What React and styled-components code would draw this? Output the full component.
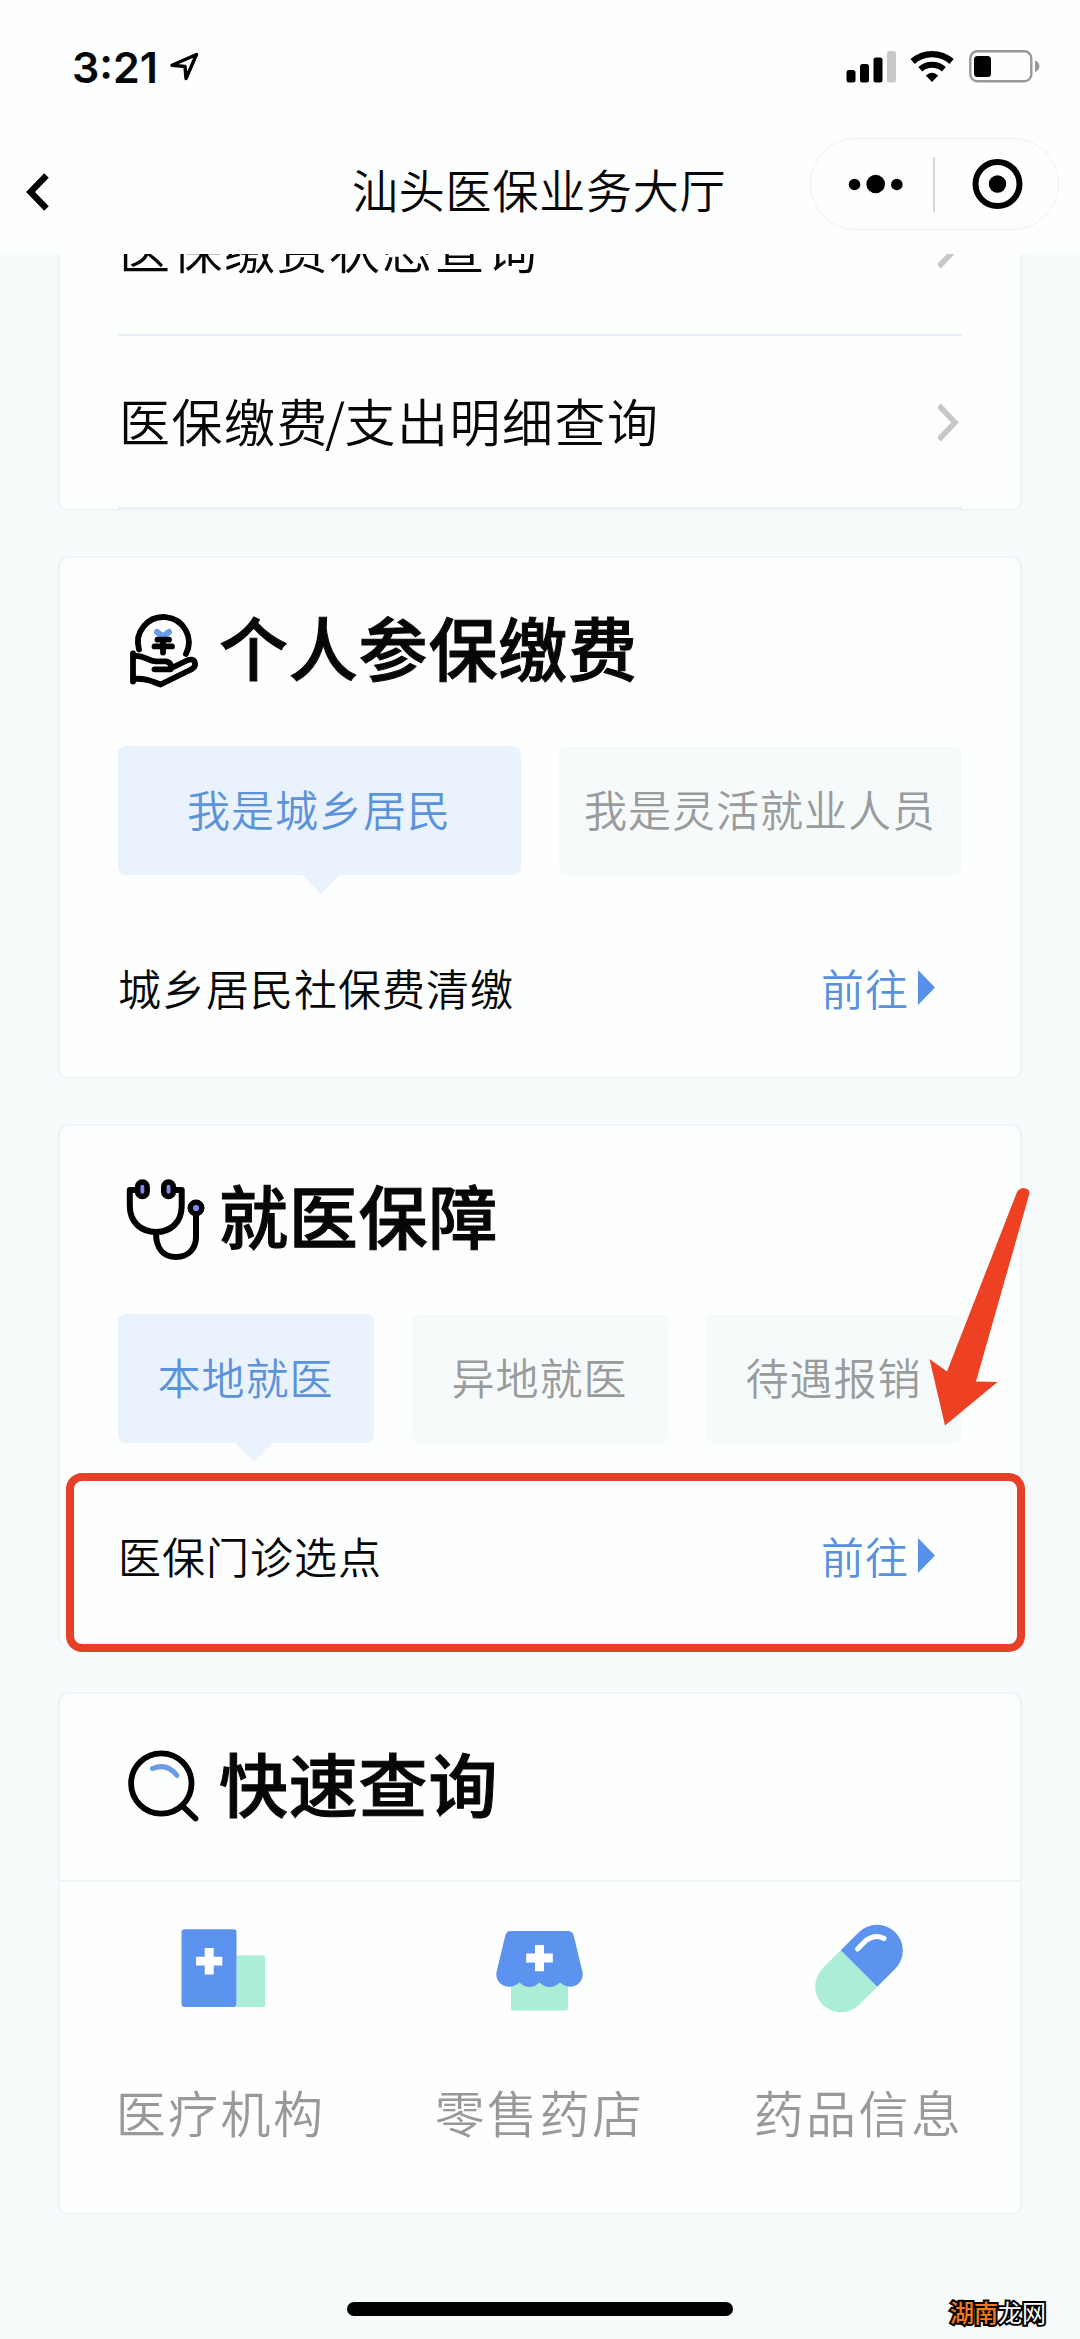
import React, { useState } from 'react';
import styled, { createGlobalStyle } from 'styled-components';

const rows = [['医保缴费状态查询'], ['医保缴费', '支出明细查询']];

const payTabs = ['我是城乡居民', '我是灵活就业人员'];
const careTabs = ['本地就医', '异地就医', '待遇报销'];

function StatusIcons() {
  return (
    <svg width="194" height="34" viewBox="846 50 194 34">
      <rect x="846.5" y="70" width="9" height="12.5" rx="2.5" />
      <rect x="860" y="64" width="9" height="18.5" rx="2.5" />
      <rect x="873.5" y="57.5" width="9" height="25" rx="2.5" />
      <rect x="887" y="51" width="9" height="31.5" rx="2.5" fill="#c9c9cb" />
      <path d="M912.6 61.5 A29.5 29.5 0 0 1 951.6 61.5" fill="none" stroke="#000" strokeWidth="6.4" />
      <path d="M920.3 69.2 A18 18 0 0 1 943.9 69.2" fill="none" stroke="#000" strokeWidth="6" />
      <path d="M925.8 75.5 Q932 70 938.2 75.5 L932 82 Z" />
      <rect x="970.3" y="51.3" width="61" height="30" rx="7" fill="none" stroke="#98999b" strokeWidth="2.4" />
      <rect x="974" y="56" width="17" height="21" rx="3.5" />
      <path d="M1035 60.5 Q1039.4 62 1039.4 66.2 Q1039.4 70.5 1035 72 Z" fill="#98999b" />
    </svg>
  );
}

function PayIcon() {
  return (
    <svg width="80" height="80" viewBox="127 608 80 80" fill="none" stroke="#000" strokeWidth="5.8" strokeLinecap="round" strokeLinejoin="round">
      <path d="M140 647.5 A25.4 25.4 0 1 1 187 652" />
      <path d="M158 630 L164 634.5 L170 630" stroke="#6a9be4" strokeWidth="6" />
      <path d="M158.5 637.7 H170 M155.5 644.4 H173 M164 638 V650.5" />
      <path d="M134 651.5 V679.5 M135 654 C145 652.5 149 659.5 157 659.3 H167 Q172 660 172.5 666 L189 658 Q196.5 656 196 663 Q195.5 666 191 668 L161.6 682.5 C150 678 146 676.5 135 676.8" />
      <path d="M155.5 667.3 H171.5" />
    </svg>
  );
}

function CareIcon() {
  return (
    <svg width="80" height="84" viewBox="126 1176 80 84" fill="none" stroke="#000" strokeWidth="6" strokeLinecap="round" strokeLinejoin="round">
      <path d="M138 1190 H129.8 V1206 C129.8 1222 141 1232 156 1232 C171 1232 181.7 1222 181.7 1206 V1190 H173" />
      <path d="M156 1233 C156 1249 164 1257 176 1257 C188 1257 196 1249 196 1237 V1212" />
      <rect x="137.6" y="1182" width="9.5" height="14.5" rx="4.7" fill="#7d89e8" strokeWidth="5.6" />
      <rect x="163.8" y="1182" width="9.5" height="14.5" rx="4.7" fill="#7d89e8" strokeWidth="5.6" />
      <circle cx="196" cy="1208" r="5.8" fill="#7d89e8" strokeWidth="5.4" />
    </svg>
  );
}

function SearchIcon() {
  return (
    <svg width="80" height="80" viewBox="126 1745 80 80" fill="none" stroke="#000" strokeLinecap="round">
      <circle cx="161.3" cy="1782.500" r="30.2" strokeWidth="5.8" />
      <path d="M183.5 1806 L195.5 1817.5" strokeWidth="5.8" />
      <path d="M152.5 1767.5 Q167 1761.5 177 1774.5" stroke="#6a9be4" strokeWidth="5" />
    </svg>
  );
}

function HospitalIcon() {
  return (
    <svg width="88" height="92" viewBox="178.5 1922 88 92">
      <path d="M238 1955.5 H264.5 Q267 1955.5 267 1958 V2004.5 Q267 2007 264.5 2007 H238 Z" fill="#abeed5" />
      <rect x="183" y="1929.3" width="55" height="77.8" rx="3" fill="#5b93ee" />
      <path d="M206.2 1948 h9 v8.8 h8.6 v8.8 h-8.6 v8.8 h-9 v-8.8 h-8.6 v-8.8 h8.6 Z" fill="#fff" />
    </svg>
  );
}

function StoreIcon() {
  return (
    <svg width="88" height="92" viewBox="497 1922 88 92">
      <path d="M512 1980 H569 V2008 Q569 2010.5 566.5 2010.5 H514.5 Q512 2010.5 512 2008 Z" fill="#abeed5" />
      <path d="M511 1931 H569 Q573.5 1931 574.7 1935.5 L583.7 1973 C584.5 1986 570 1991 561 1982.5 Q550.5 1991.5 540.5 1982.5 Q530.5 1991.5 520.5 1982.5 C511 1991 496.5 1986 497.3 1973 L506.3 1935.5 Q507.5 1931 511 1931 Z" fill="#5b93ee" />
      <path d="M536 1945 h9 v8.6 h8.8 v8.8 h-8.8 v8.8 h-9 v-8.8 h-8.8 v-8.8 h8.8 Z" fill="#fff" />
    </svg>
  );
}

function PillIcon() {
  return (
    <svg width="90" height="92" viewBox="815 1922 90 92">
      <g transform="rotate(-45 860 1968.5)">
        <path d="M860 1942.7 H834.5 A25.8 25.8 0 0 0 834.5 1994.3 H860 Z" fill="#abeed5" />
        <path d="M860 1942.7 H885.5 A25.8 25.8 0 0 1 885.5 1994.3 H860 Z" fill="#5b93ee" />
      </g>
      <path d="M858.5 1949 L867 1940.5 Q876 1933.5 885 1938.5" fill="none" stroke="#fff" strokeWidth="5" strokeLinecap="round" />
    </svg>
  );
}

const entries = [
  { name: '医疗机构', icon: <HospitalIcon /> },
  { name: '零售药店', icon: <StoreIcon /> },
  { name: '药品信息', icon: <PillIcon /> },
];

function Tabs({ items }) {
  const [active, setActive] = useState(0);
  return (
    <TabBar $count={items.length}>
      {items.map((name, index) => (
        <Tab
          key={name}
          $active={index === active}
          $narrow={items.length > 2}
          onClick={() => setActive(index)}
        >
          {name}
        </Tab>
      ))}
    </TabBar>
  );
}

function GoRow({ name }) {
  return (
    <Service>
      <span>{name}</span>
      <GoLink>
        前往
        <svg width="17" height="35" viewBox="0 0 17 35">
          <path d="M0 0 L17 17.5 L0 35 Z" fill="#5790ea" />
        </svg>
      </GoLink>
    </Service>
  );
}

function App() {
  return (
    <>
      <GlobalStyle />
      <Screen>
        <Header>
          <StatusBar>
            <Clock>3:21</Clock>
            <svg width="29" height="29" viewBox="0 0 29 29">
              <path d="M2 13.3 L26.5 2.5 L16 26.5 L15 14.5 Z" fill="none" stroke="#000" strokeWidth="3.4" strokeLinejoin="round" />
            </svg>
            <Spacer />
            <StatusIcons />
          </StatusBar>
          <NavBar>
            <BackIcon width="24" height="40" viewBox="0 0 24 40">
              <path d="M21.5 3.5 L5.5 20 L21.5 36.5" fill="none" stroke="#000" strokeWidth="6.4" />
            </BackIcon>
            <Title>汕头医保业务大厅</Title>
            <Capsule>
              <svg width="56" height="20" viewBox="0 0 56 20">
                <circle cx="6.5" cy="10.5" r="5.8" />
                <circle cx="27.7" cy="10" r="9.3" />
                <circle cx="48.8" cy="10.5" r="5.8" />
              </svg>
              <Divider />
              <svg width="52" height="52" viewBox="0 0 52 52">
                <circle cx="26.5" cy="26" r="22" fill="none" stroke="#000" strokeWidth="6" />
                <circle cx="26.5" cy="26" r="8.7" />
              </svg>
            </Capsule>
          </NavBar>
        </Header>

        <Content>
          <QueryCard>
            {rows.map(([name, rest]) => (
              <QueryRow key={rest || name}>
                <span>
                  {name}
                  {rest && <Slash>/</Slash>}
                  {rest}
                </span>
                <svg width="24" height="40" viewBox="0 0 24 40">
                  <path d="M0.8 3.5 L17 20.5 L0.8 37.5" fill="none" stroke="#c6c7c9" strokeWidth="5.6" />
                </svg>
              </QueryRow>
            ))}
          </QueryCard>

          <Card>
            <CardTitle>
              <PayIcon />
              <span>个人参保缴费</span>
            </CardTitle>
            <Tabs items={payTabs} />
            <GoRow name="城乡居民社保费清缴" />
          </Card>

          <Card>
            <CardTitle>
              <CareIcon />
              <span>就医保障</span>
            </CardTitle>
            <Tabs items={careTabs} />
            <GoRow name="医保门诊选点" />
            <Highlight />
            <Pointer width="104" height="242" viewBox="928 1186 104 242">
              <path d="M1017 1192 Q1021 1186.5 1026 1188.5 Q1030.5 1190 1029 1195 L976 1381.5 L997.5 1382 L945 1425.5 L929.5 1359 L947 1371.5 Z" fill="#ee4023" />
            </Pointer>
          </Card>

          <Card>
            <CardTitle>
              <SearchIcon />
              <span>快速查询</span>
            </CardTitle>
            <Entries>
              {entries.map((item) => (
                <Entry key={item.name}>
                  {item.icon}
                  {item.name}
                </Entry>
              ))}
            </Entries>
          </Card>
        </Content>

        <HomeIndicator />
        <Watermark>
          <b>湖南</b>
          龙网
        </Watermark>
      </Screen>
    </>
  );
}

const GlobalStyle = createGlobalStyle`
  body {
    margin: 0;
    background: #f7fbfc;
  }
`;

const Screen = styled.div`
  position: relative;
  display: flex;
  flex-direction: column;
  width: 1080px;
  height: 2339px;
  overflow: hidden;
  background: #f7fbfc;
  color: #060708;
  font-family: 'Noto Sans CJK SC', sans-serif;
  font-weight: 350;

  svg {
    flex: none;
    display: block;
  }
`;

const Header = styled.header`
  flex: none;
  height: 254px;
  background: #fdfefe;
`;

const StatusBar = styled.div`
  display: flex;
  align-items: center;
  height: 133px;
  padding: 0 40px 1px 72px;
`;

const Clock = styled.span`
  width: 98px;
  font-family: Inter, sans-serif;
  font-size: 43px;
  font-weight: 600;
`;

const Spacer = styled.div`
  flex: 1;
`;

const NavBar = styled.div`
  display: grid;
  grid-template-columns: 327px 1fr 249px;
  align-items: center;
  height: 100px;
  padding: 0 21px 0 25px;
`;

const BackIcon = styled.svg`
  margin-top: 15px;
`;

const Title = styled.h1`
  margin: 7px 0 0;
  font-size: 46px;
  font-weight: 350;
  line-height: 60px;
  letter-spacing: 0.8px;
`;

const Capsule = styled.div`
  box-sizing: border-box;
  display: flex;
  align-items: center;
  height: 92px;
  padding: 0 35px 0 37px;
  border: 1.5px solid #eef0f4;
  border-radius: 46px;
`;

const Divider = styled.div`
  width: 1.5px;
  height: 55px;
  margin: 0 36px 0 29px;
  background: #d4d6d8;
`;

const Content = styled.main`
  flex: 1;
  display: flex;
  flex-direction: column;
  gap: 45px;
  padding: 0 58px;
  overflow: hidden;
`;

const Card = styled.section`
  position: relative;
  box-sizing: border-box;
  flex: none;
  height: 523px;
  border: 2px solid #eff2f6;
  border-radius: 10px;
  background: #fdfefe;
`;

const QueryCard = styled(Card)`
  height: 350px;
  margin-top: -93px;
  padding: 0 58px;
`;

const QueryRow = styled.div`
  box-sizing: border-box;
  display: flex;
  align-items: center;
  justify-content: space-between;
  height: 173px;
  padding-left: 1px;
  border-bottom: 2px solid #ebeef5;
  font-size: 51px;
  letter-spacing: 1.5px;

  span {
    padding-bottom: 4px;
  }
`;

const Slash = styled.i`
  margin: 0 -2px 0 -4px;
  font-style: normal;
`;

const CardTitle = styled.h2`
  display: flex;
  align-items: center;
  gap: 13px;
  height: 188px;
  margin: 0;
  padding: 0 66px 4px;
  box-sizing: border-box;
  font-size: 69px;
  font-weight: 500;
  letter-spacing: 0.8px;
  -webkit-text-stroke: 1px #060708;

  span {
    padding-bottom: 8px;
  }
`;

const TabBar = styled.div`
  display: grid;
  grid-template-columns: repeat(${(props) => props.$count}, 1fr);
  gap: 38px;
  padding: 0 58px;
`;

const Tab = styled.button`
  position: relative;
  height: 129px;
  padding: 0 1px 5px 0;
  border: 0;
  border-radius: 8px;
  background: ${(props) => (props.$active ? '#eaf2fd' : '#f7fafb')};
  color: ${(props) => (props.$active ? '#5b93db' : '#999b9d')};
  font: inherit;
  font-size: 43px;
  letter-spacing: 1px;
  white-space: nowrap;

  &::after {
    content: '';
    display: ${(props) => (props.$active ? 'block' : 'none')};
    position: absolute;
    top: 100%;
    left: 50%;
    margin-left: ${(props) => (props.$narrow ? '-11px' : '-18px')};
    border: 19px solid transparent;
    border-top-color: #eaf2fd;
    border-bottom: 0;
  }
`;

const Service = styled.div`
  display: flex;
  align-items: center;
  justify-content: space-between;
  margin-top: 82px;
  padding: 0 85px 0 58px;
  font-size: 43px;
  line-height: 60px;
  letter-spacing: 1px;
`;

const GoLink = styled.a`
  display: flex;
  align-items: center;
  gap: 9px;
  color: #5790e0;
`;

// sits over the service row and spills past the card edges
const Highlight = styled.div`
  position: absolute;
  top: 347px;
  left: 6px;
  box-sizing: border-box;
  width: 959px;
  height: 179px;
  border: 8px solid #e64128;
  border-radius: 16px;
`;

const Pointer = styled.svg`
  position: absolute;
  top: 60px;
  left: 868px;
`;

const Entries = styled.div`
  display: grid;
  grid-template-columns: repeat(3, 319px);
  padding-left: 1px;
  margin-top: -2px;
  border-top: 2px solid #eff3f6;
`;

const Entry = styled.div`
  display: flex;
  flex-direction: column;
  align-items: center;
  gap: 60px;
  padding-top: 40px;
  color: #97999b;
  font-size: 50px;
  line-height: 74px;
  letter-spacing: 2.4px;
`;

const HomeIndicator = styled.div`
  position: absolute;
  bottom: 23px;
  left: 347px;
  width: 386px;
  height: 14px;
  border-radius: 7px;
  background: #000;
`;

const Watermark = styled.div`
  position: absolute;
  right: 34px;
  bottom: 10px;
  color: #fff;
  font-size: 24px;
  font-weight: 400;
  line-height: 34px;
  -webkit-text-stroke: 4px #000;
  paint-order: stroke fill;

  b {
    color: #f5781a;
    font-weight: 500;
  }
`;

export default App;
